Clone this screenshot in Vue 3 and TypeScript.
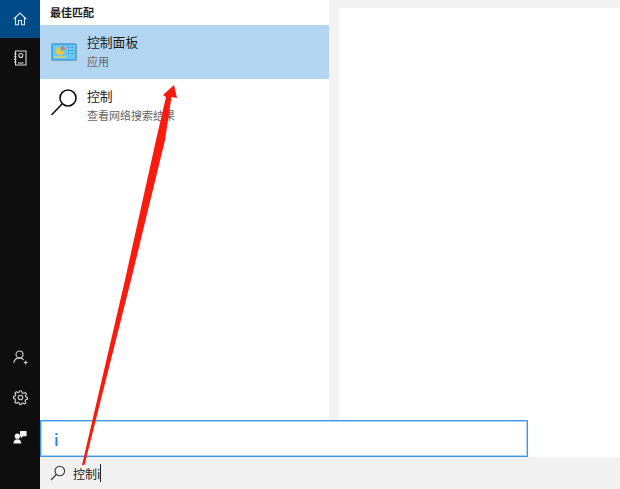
<script setup lang="ts">
const results = [
  { title: "控制面板", sub: "应用", active: true, kind: "panel" },
  { title: "控制", sub: "查看网络搜索结果", active: false, kind: "search" },
];
</script>

<template>
  <div class="screen">
    <aside class="sidebar">
      <div class="side-top">
        <div class="side-item home">
          <svg width="14" height="14" viewBox="0 0 14 14" fill="none" stroke="#dbe8f3" stroke-width="1.100">
            <path d="M.8 7 7 1 13.200 7M2.500 5.500V12.800H5.500V8.500H8.500V12.800H11.500V5.500" />
          </svg>
        </div>
        <div class="side-item">
          <svg width="14" height="16" viewBox="0 0 14 16" fill="none" stroke="#d8d8d8" stroke-width="1.100">
            <path d="M2.500 1H13V15H2.500Z" />
            <path d="M1 4H3.500M1 6.700H3.500M1 9.400H3.500M1 12H3.500" />
            <circle cx="7.800" cy="5.500" r="2" />
            <path d="M5 13H10.500" />
          </svg>
        </div>
      </div>
      <div class="side-bottom">
        <div class="side-item">
          <svg width="15" height="15" viewBox="0 0 15 15" fill="none" stroke="#d8d8d8" stroke-width="1.100">
            <circle cx="6.500" cy="4.500" r="3.500" />
            <path d="M.8 13C1.200 10 3.500 8 6.500 8 8.300 8 9.700 8.700 10.700 10M10.800 12.500H14.500M12.700 10.700V14.400" />
          </svg>
        </div>
        <div class="side-item">
          <svg width="15" height="15" viewBox="0 0 16 16" fill="none" stroke="#d0d0d0" stroke-width="1.200">
            <circle cx="8" cy="8" r="2.400" />
            <path d="M6.800 1H9.200L9.600 3 11.200 3.700 13 2.600 14.400 4.300 13.100 5.900 13.700 7.300 15.400 7.900V10L13.500 10.400 12.800 12 13.800 13.700 12.100 15 10.600 13.700 9.200 14.300 8.800 15.400H7L6.600 13.900 5 13.200 3.300 14.200 1.800 12.700 2.900 11 2.300 9.500.6 9.100V6.900L2.400 6.400 3 4.900 2 3.300 3.600 1.800 5.200 2.800 6.500 2.300Z" />
          </svg>
        </div>
        <div class="side-item">
          <svg width="14" height="14" viewBox="0 0 16 16" fill="#f4f4f4">
            <circle cx="5" cy="7" r="3" />
            <path d="M.5 15.500C.5 12 2.500 10.500 5 10.500S9.500 12 9.500 15.500ZM8 1H15.500V7H11.500L9 9.500V7H8Z" />
          </svg>
        </div>
      </div>
    </aside>

    <main class="main">
      <div class="content">
        <section class="list">
          <h3 class="list-title">最佳匹配</h3>
          <div v-for="r in results" :key="r.title" class="result" :class="{ active: r.active }">
            <svg v-if="r.kind === 'panel'" class="result-icon" width="26" height="20" viewBox="0 0 26 20">
              <rect x=".5" y="1.500" width="25" height="17" rx="1" fill="#3fa4e8" stroke="#6fa6cf" />
              <rect x="2" y="3" width="22" height="14" fill="#6cc6f6" />
              <path d="M9 5A4 4 0 1 0 13 9H9Z" fill="#f5c52c" />
              <path d="M10 4A4 4 0 0 1 14 8H10Z" fill="#e27b3e" />
              <path d="M17 5.500H18.500M20.500 5.500H22M17 8.500H18.500M20.500 8.500H22M17 11.500H18.500M20.500 11.500H22" stroke="#1f86d0" stroke-width="1.200" />
              <path d="M3.500 15H15" stroke="#e9cc66" stroke-width="1.500" />
            </svg>
            <svg v-else class="result-icon lens" width="28" height="28" viewBox="0 0 28 28" fill="none" stroke="#111" stroke-width="1.600">
              <circle cx="18" cy="10" r="8" />
              <path d="M12 16 1.500 27" />
            </svg>
            <div class="result-text">
              <div class="result-title">{{ r.title }}</div>
              <div class="result-sub">{{ r.sub }}</div>
            </div>
          </div>
        </section>
        <section class="preview"></section>
      </div>

      <footer class="searchbar">
        <svg width="16" height="16" viewBox="0 0 16 16" fill="none" stroke="#333" stroke-width="1.100">
          <circle cx="9.800" cy="6" r="4.800" />
          <path d="M6.300 9.500 1 15" />
        </svg>
        <span class="query">控制i</span>
        <span class="caret"></span>
      </footer>

      <div class="ime"><span>i</span></div>
    </main>

    <svg class="arrow" width="620" height="489" viewBox="0 0 620 489">
      <path d="M174 85 177 98 171.500 97 165 140 131 280 84.500 465H82L125 280 156 140 166 97 163 95Z" fill="#fb1a0e" />
    </svg>
  </div>
</template>

<style scoped>
.screen {
  position: relative;
  display: flex;
  width: 620px;
  height: 489px;
  overflow: hidden;
  font-family: "Noto Sans CJK SC", "Liberation Sans", sans-serif;
}

.sidebar {
  width: 40px;
  flex-shrink: 0;
  background: #0e0e0e;
  display: flex;
  flex-direction: column;
  justify-content: space-between;
  padding-bottom: 32px;
  box-sizing: border-box;
}

.side-item {
  height: 40px;
  display: flex;
  align-items: center;
  justify-content: center;
}

.side-item.home {
  height: 38px;
  background: #004b87;
}

.main {
  position: relative;
  flex: 1;
  display: flex;
  flex-direction: column;
  min-width: 0;
}

.content {
  flex: 1;
  display: flex;
  background: #f3f3f3;
}

.list {
  width: 289px;
  background: #fff;
}

.list-title {
  margin: 0;
  height: 25px;
  padding-left: 10px;
  font-size: 11px;
  font-weight: 700;
  line-height: 24px;
  color: #222;
}

.result {
  height: 54px;
  display: flex;
  align-items: center;
  padding-left: 10px;
  box-sizing: border-box;
  position: relative;
}

.result.active {
  background: #b2d6f2;
}

.result-icon {
  position: absolute;
  left: 11px;
  top: 50%;
  transform: translateY(-50%);
}

.result-icon.lens {
  left: 10px;
  transform: translateY(-18px);
}

.result-text {
  margin-left: 37px;
}

.result-title {
  font-size: 12.800px;
  line-height: 18px;
  color: #1a1a1a;
}

.result-sub {
  font-size: 11px;
  line-height: 21px;
  color: #666;
}

.preview {
  flex: 1;
  margin: 8px 0 0 10px;
  background: #fff;
}

.searchbar {
  height: 32px;
  flex-shrink: 0;
  background: #f1f1f1;
  display: flex;
  align-items: center;
  padding-left: 10px;
}

.query {
  margin-left: 7px;
  font-size: 12px;
  color: #222;
}

.caret {
  width: 1px;
  height: 18px;
  background: #222;
}

.ime {
  position: absolute;
  left: 0;
  bottom: 32px;
  width: 488px;
  height: 37px;
  box-sizing: border-box;
  border: 1px solid #3f9ae6;
  box-shadow: inset 0 0 0 1px #a9d3f3;
  background: #fff;
  display: flex;
  align-items: center;
  padding-left: 13px;
  color: #1f86d8;
  font-size: 16px;
  font-weight: 500;
}

.arrow {
  position: absolute;
  left: 0;
  top: 0;
  pointer-events: none;
}
</style>
